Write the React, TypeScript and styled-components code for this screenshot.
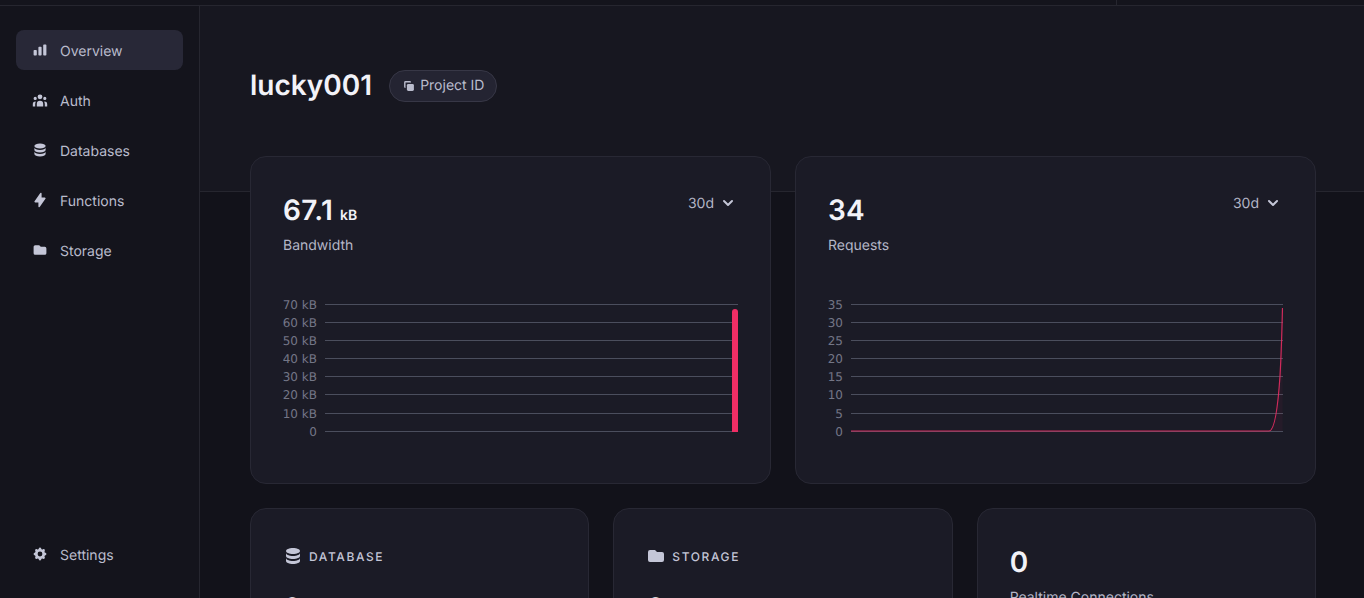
import React from 'react';
import styled, {createGlobalStyle} from 'styled-components';
import {
  HiChartBar,
  HiUserGroup,
  HiDatabase,
  HiLightningBolt,
  HiFolder,
  HiCog,
  HiDuplicate,
  HiChevronDown,
} from 'react-icons/hi';

const GlobalStyle = createGlobalStyle`
  html, body {
    margin: 0;
    height: 100%;
    overflow: hidden;
    background: #14141c;
  }
  body {
    font-family: Inter, "Liberation Sans", sans-serif;
    color: #c4c6d7;
    text-rendering: geometricPrecision;
    -webkit-font-smoothing: antialiased;
  }
`;

const Page = styled.div`
  display: flex;
  flex-direction: column;
  height: 598px;
  overflow: hidden;
`;

const TopStrip = styled.div`
  display: flex;
  justify-content: flex-end;
  height: 5px;
  flex-shrink: 0;
  border-bottom: 1px solid #26262f;
  background: #14141c;
`;

const TopCell = styled.div`
  width: 247px;
  border-left: 1px solid #26262f;
`;

const Body = styled.div`
  display: flex;
  flex: 1;
  min-height: 0;
`;

const Sidebar = styled.nav`
  width: 200px;
  flex-shrink: 0;
  box-sizing: border-box;
  padding: 24px 16px 24px;
  display: flex;
  flex-direction: column;
  justify-content: space-between;
  border-right: 1px solid #26262f;
  background: #14141c;
`;

const NavList = styled.div`
  display: flex;
  flex-direction: column;
  gap: 10px;
`;

const NavItem = styled.div<{$active?: boolean}>`
  height: 40px;
  display: flex;
  align-items: center;
  gap: 12px;
  padding: 0 16px;
  border-radius: 8px;
  font-size: 14px;
  color: #c4c6d7;
  background: ${p => (p.$active ? '#282837' : 'transparent')};

  svg {
    width: 16px;
    height: 16px;
    flex-shrink: 0;
  }
`;

const NavText = styled.span`
  line-height: 20px;
  padding-top: 4px;
  color: #babccd;
`;

const Main = styled.main`
  flex: 1;
  min-width: 0;
  background: #12121a;
`;

const Hero = styled.header`
  height: 186px;
  box-sizing: border-box;
  padding: 64px 48px 0 50px;
  display: flex;
  align-items: flex-start;
  gap: 17px;
  border-bottom: 1px solid #26262f;
  background: #171720;
`;

const Title = styled.h1`
  margin: 0;
  font-size: 28px;
  line-height: 30px;
  font-weight: 600;
  color: #f2f2f8;
`;

const Badge = styled.button`
  height: 32px;
  box-sizing: border-box;
  padding: 0 12px;
  display: flex;
  align-items: center;
  gap: 4px;
  border: 1px solid #373746;
  border-radius: 16px;
  background: #242432;
  color: #babccd;
  font-family: inherit;
  font-size: 14px;
  line-height: 18px;
  text-rendering: geometricPrecision;

  svg {
    width: 14px;
    height: 14px;
  }
`;

const Content = styled.div`
  margin-top: -36px;
  padding: 0 48px 0 50px;
  display: flex;
  flex-direction: column;
  gap: 24px;
  position: relative;
`;

const ChartRow = styled.div`
  display: grid;
  grid-template-columns: 1fr 1fr;
  gap: 24px;
`;

const StatRow = styled.div`
  display: grid;
  grid-template-columns: repeat(3, 1fr);
  gap: 24px;
`;

const Card = styled.section`
  box-sizing: border-box;
  padding: 32px;
  border: 1px solid #282834;
  border-radius: 16px;
  background: #1b1b26;
`;

const CardHead = styled.div`
  display: flex;
  justify-content: space-between;
  align-items: flex-start;
  height: 98px;
`;

const Value = styled.div`
  height: 42px;
  font-size: 28px;
  line-height: 42px;
  font-weight: 600;
  letter-spacing: 0.3px;
  color: #f2f2f8;
`;

const Unit = styled.span`
  margin-left: 7px;
  font-size: 14px;
  line-height: 14px;
  font-weight: 600;
  letter-spacing: 0;
`;

const Label = styled.div`
  margin-top: 4px;
  font-size: 14px;
  line-height: 22px;
  color: #b4b6c7;
`;

const RangeSelect = styled.div`
  display: flex;
  align-items: center;
  gap: 4px;
  height: 28px;
  font-size: 14px;
  color: #b4b6c7;

  svg {
    width: 20px;
    height: 20px;
    color: #c4c6d7;
  }
`;

const ChartSvg = styled.svg`
  display: block;
  width: 100%;
  height: 155px;
  margin-top: 9px;

  text {
    font-family: "DejaVu Sans", sans-serif;
    font-size: 12px;
    fill: #747686;
  }
`;

const SectionTitle = styled.div`
  display: flex;
  align-items: center;
  gap: 6px;
  height: 20px;
  padding-top: 5px;
  font-size: 12px;
  font-weight: 500;
  letter-spacing: 1.6px;
  color: #c4c6d7;

  svg {
    width: 20px;
    height: 20px;
    flex-shrink: 0;
  }
`;

const Spaced = styled.div`
  margin-top: 21px;
`;

const gridY = [8, 26, 44, 62, 80, 98, 117, 135];
const WIDTH = 455;

interface IChartProps {
  labels: string[];
  plotLeft: number;
  children?: React.ReactNode;
}

const Chart = ({labels, plotLeft, children}: IChartProps) => (
  <ChartSvg viewBox={`0 0 ${WIDTH} 155`}>
    {gridY.map((y, i) => (
      <g key={y}>
        <line x1={plotLeft} x2={WIDTH} y1={y + 0.5} y2={y + 0.5} stroke="#4b4e5d" />
        <text x={plotLeft - 8} y={y + 5} textAnchor="end">{labels[i]}</text>
      </g>
    ))}
    {children}
  </ChartSvg>
);

const navItems = [
  {name: 'Overview', icon: <HiChartBar />, active: true},
  {name: 'Auth', icon: <HiUserGroup />},
  {name: 'Databases', icon: <HiDatabase />},
  {name: 'Functions', icon: <HiLightningBolt />},
  {name: 'Storage', icon: <HiFolder />},
];

const App = () => (
  <Page>
    <GlobalStyle />
    <TopStrip>
      <TopCell />
    </TopStrip>
    <Body>
      <Sidebar>
        <NavList>
          {navItems.map(item => (
            <NavItem key={item.name} $active={item.active}>
              {item.icon}
              <NavText>{item.name}</NavText>
            </NavItem>
          ))}
        </NavList>
        <NavItem>
          <HiCog />
          <NavText>Settings</NavText>
        </NavItem>
      </Sidebar>
      <Main>
        <Hero>
          <Title>lucky001</Title>
          <Badge>
            <HiDuplicate />
            Project ID
          </Badge>
        </Hero>
        <Content>
          <ChartRow>
            <Card>
              <CardHead>
                <div>
                  <Value>67.1<Unit>kB</Unit></Value>
                  <Label>Bandwidth</Label>
                </div>
                <RangeSelect>30d <HiChevronDown /></RangeSelect>
              </CardHead>
              <Chart
                plotLeft={42}
                labels={['70 kB', '60 kB', '50 kB', '40 kB', '30 kB', '20 kB', '10 kB', '0']}
              >
                <path d="M449 136V16a3 3 0 0 1 6 0V136Z" fill="#f02e65" />
              </Chart>
            </Card>
            <Card>
              <CardHead>
                <div>
                  <Value>34</Value>
                  <Label>Requests</Label>
                </div>
                <RangeSelect>30d <HiChevronDown /></RangeSelect>
              </CardHead>
              <Chart plotLeft={23} labels={['35', '30', '25', '20', '15', '10', '5', '0']}>
                <path
                  d="M441 135C447 135 450 110 452 80C453.500 55 454 30 454.500 12V135Z"
                  fill="#f02e65"
                  opacity="0.05"
                />
                <path
                  d="M23 135H441C447 135 450 110 452 80C453.500 55 454 30 454.500 12"
                  fill="none"
                  stroke="#f02e65"
                  strokeOpacity="0.85"
                  strokeWidth="1.2"
                />
              </Chart>
            </Card>
          </ChartRow>
          <StatRow>
            <Card>
              <SectionTitle><HiDatabase />DATABASE</SectionTitle>
              <Spaced><Value>0</Value></Spaced>
            </Card>
            <Card>
              <SectionTitle><HiFolder />STORAGE</SectionTitle>
              <Spaced><Value>0</Value></Spaced>
            </Card>
            <Card>
              <Value>0</Value>
              <Label>Realtime Connections</Label>
            </Card>
          </StatRow>
        </Content>
      </Main>
    </Body>
  </Page>
);

export default App;
